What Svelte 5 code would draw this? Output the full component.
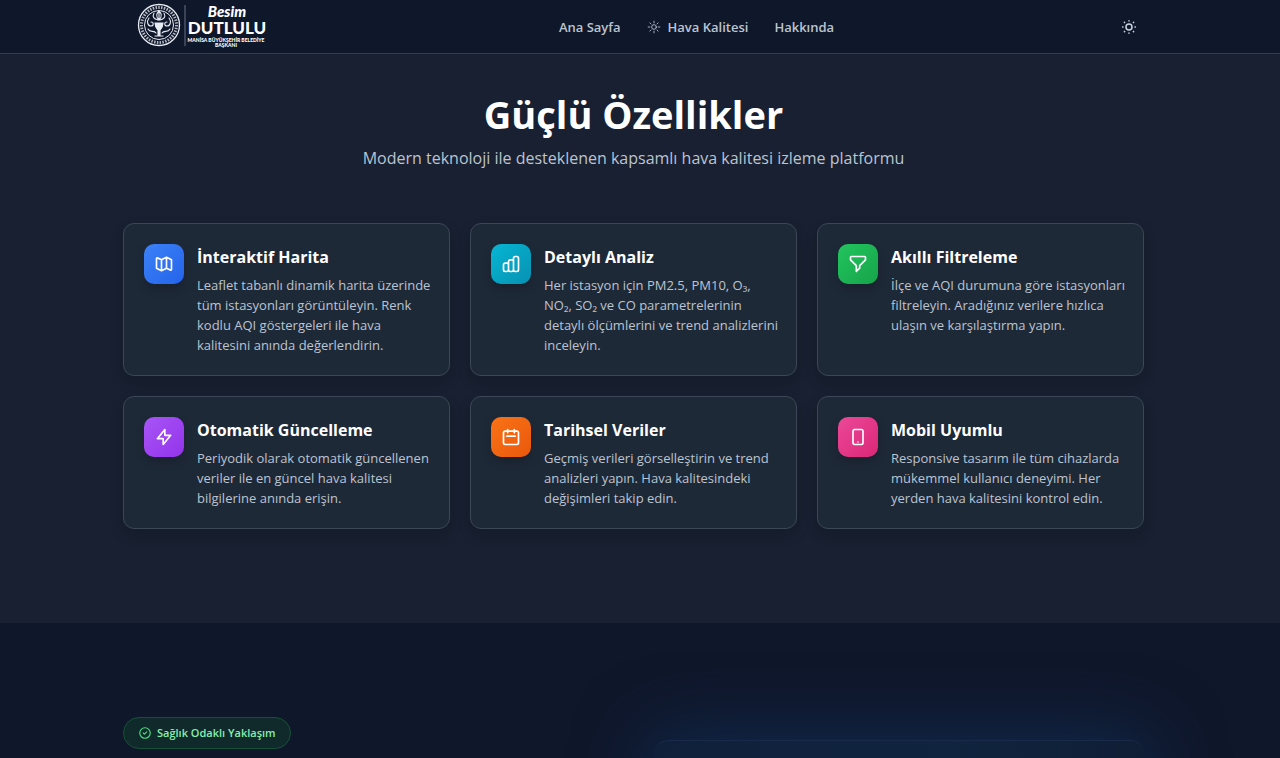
<script>
	const features = [
		{
			title: "İnteraktif Harita",
			text: "Leaflet tabanlı dinamik harita üzerinde tüm istasyonları görüntüleyin. Renk kodlu AQI göstergeleri ile hava kalitesini anında değerlendirin.",
			color: "blue",
			icon: "M9 20l-5.447-2.724A1 1 0 013 16.382V5.618a1 1 0 011.447-.894L9 7m0 13l6-3m-6 3V7m6 10l4.553 2.276A1 1 0 0021 18.382V7.618a1 1 0 00-.553-.894L15 4m0 13V4m0 0L9 7"
		},
		{
			title: "Detaylı Analiz",
			text: "Her istasyon için PM2.5, PM10, O₃, NO₂, SO₂ ve CO parametrelerinin detaylı ölçümlerini ve trend analizlerini inceleyin.",
			color: "cyan",
			icon: "M9 19v-6a2 2 0 00-2-2H5a2 2 0 00-2 2v6a2 2 0 002 2h2a2 2 0 002-2zm0 0V9a2 2 0 012-2h2a2 2 0 012 2v10m-6 0a2 2 0 002 2h2a2 2 0 002-2m0 0V5a2 2 0 012-2h2a2 2 0 012 2v14a2 2 0 01-2 2h-2a2 2 0 01-2-2z"
		},
		{
			title: "Akıllı Filtreleme",
			text: "İlçe ve AQI durumuna göre istasyonları filtreleyin. Aradığınız verilere hızlıca ulaşın ve karşılaştırma yapın.",
			color: "green",
			icon: "M3 4a1 1 0 011-1h16a1 1 0 011 1v2.586a1 1 0 01-.293.707l-6.414 6.414a1 1 0 00-.293.707V17l-4 4v-6.586a1 1 0 00-.293-.707L3.293 7.293A1 1 0 013 6.586V4z"
		},
		{
			title: "Otomatik Güncelleme",
			text: "Periyodik olarak otomatik güncellenen veriler ile en güncel hava kalitesi bilgilerine anında erişin.",
			color: "purple",
			icon: "M13 10V3L4 14h7v7l9-11h-7z"
		},
		{
			title: "Tarihsel Veriler",
			text: "Geçmiş verileri görselleştirin ve trend analizleri yapın. Hava kalitesindeki değişimleri takip edin.",
			color: "orange",
			icon: "M8 7V3m8 4V3m-9 8h10M5 21h14a2 2 0 002-2V7a2 2 0 00-2-2H5a2 2 0 00-2 2v12a2 2 0 002 2z"
		},
		{
			title: "Mobil Uyumlu",
			text: "Responsive tasarım ile tüm cihazlarda mükemmel kullanıcı deneyimi. Her yerden hava kalitesini kontrol edin.",
			color: "pink",
			icon: "M12 18h.01M8 21h8a2 2 0 002-2V5a2 2 0 00-2-2H8a2 2 0 00-2 2v14a2 2 0 002 2z"
		}
	];

	let dark = $state(true);
</script>

<div class="page" class:light={!dark}>
	<header>
		<div class="container bar">
			<a class="logo" href="#top" aria-label="Besim Dutlulu">
				<svg width="130" height="48" viewBox="0 0 130 48" fill="none" stroke="#e8ecf3">
					<circle cx="22" cy="22" r="20.5" stroke-width="1.3" />
					<circle cx="22" cy="22" r="17.5" stroke-width="3" stroke-dasharray="1.5 1.3" opacity="0.75" />
					<circle cx="22" cy="22" r="14.5" stroke-width="1" />
					<g stroke-width="1.1" stroke-linecap="round">
						<path d="M22 8v9M22 8c-3 3-3 6 0 9c3-3 3-6 0-9zM17 10c-2 4 0 6 4 7M27 10c2 4 0 6-4 7" />
						<path d="M12 15c-3 4-1 8 2 8c3 0 3-4 0-4M32 15c3 4 1 8-2 8c-3 0-3-4 0-4" />
						<path d="M11 26c2 4 6 1 8 4M33 26c-2 4-6 1-8 4" />
						<path d="M18 20h8c0 4-2 6-3 7v5h-2v-5c-1-1-3-3-3-7zM18 33h8" fill="#e8ecf3" />
					</g>
					<path d="M48 2v41" stroke="#667085" stroke-width="1" />
					<g fill="#fff" stroke="none" text-anchor="middle">
						<text x="90" y="14" class="logo-script">Besim</text>
						<text x="90" y="31" class="logo-name">DUTLULU</text>
						<text x="89" y="39" class="logo-small">MANİSA BÜYÜKŞEHİR BELEDİYE</text>
						<text x="89" y="44" class="logo-small">BAŞKANI</text>
					</g>
				</svg>
			</a>

			<nav>
				<a href="#ana-sayfa">Ana Sayfa</a>
				<a href="#hava-kalitesi">
					<svg width="14" height="14" viewBox="0 0 24 24" fill="none" stroke="currentColor" stroke-width="1.5" stroke-linecap="round">
						<circle cx="12" cy="12" r="4" />
						<path d="M12 2v3M12 19v3M2 12h3M19 12h3M4.9 4.9l2 2M17.1 17.1l2 2M4.9 19.1l2-2M17.1 6.9l2-2" />
					</svg>
					Hava Kalitesi
				</a>
				<a href="#hakkinda">Hakkında</a>
			</nav>

			<button class="theme" type="button" aria-label="Tema değiştir" onclick={() => (dark = !dark)}>
				<svg width="16" height="16" viewBox="0 0 24 24" fill="none" stroke="currentColor" stroke-width="2.2" stroke-linecap="round">
					<circle cx="12" cy="12" r="4.5" />
					<path d="M12 2.5v.5M12 21v.5M2.5 12h.5M21 12h.5M5 5l.4.4M18.6 18.6l.4.4M5 19l.4-.4M18.6 5.4l.4-.4" />
				</svg>
			</button>
		</div>
	</header>

	<section class="features">
		<div class="container">
			<h2>Güçlü Özellikler</h2>
			<p class="lead">Modern teknoloji ile desteklenen kapsamlı hava kalitesi izleme platformu</p>

			<div class="grid">
				{#each features as feature}
					<article class="card">
						<div class="tile {feature.color}">
							<svg width="20" height="20" viewBox="0 0 24 24" fill="none" stroke="currentColor" stroke-width="2" stroke-linecap="round" stroke-linejoin="round">
								<path d={feature.icon} />
							</svg>
						</div>
						<div class="card-body">
							<h3>{feature.title}</h3>
							<p>{feature.text}</p>
						</div>
					</article>
				{/each}
			</div>
		</div>
	</section>

	<section class="health">
		<div class="container split">
			<div>
				<span class="badge">
					<svg width="14" height="14" viewBox="0 0 24 24" fill="none" stroke="currentColor" stroke-width="2" stroke-linecap="round" stroke-linejoin="round">
						<path d="M9 12l2 2 4-4m6 2a9 9 0 11-18 0 9 9 0 0118 0z" />
					</svg>
					Sağlık Odaklı Yaklaşım
				</span>
			</div>
			<div class="panel"></div>
		</div>
	</section>
</div>

<style>
	:global(body) {
		background: #0f172a;
	}

	.page {
		color: #bcc4d0;
		font-family: "Segoe UI", "Open Sans", "Noto Sans", sans-serif;
		font-size: 13px;
		height: 100vh;
		line-height: 20px;
		overflow: hidden;
	}

	.page.light {
		filter: invert(1) hue-rotate(180deg);
	}

	header,
	section {
		padding-right: 13px;
	}

	.container {
		margin: 0 auto;
		max-width: 1021px;
	}

	header {
		background: #0f172a;
		border-bottom: 1px solid #333c4e;
	}

	.bar {
		align-items: center;
		display: flex;
		height: 53px;
		justify-content: space-between;
	}

	.logo {
		padding: 0 12px 0 14px;
	}

	.logo svg {
		display: block;
	}

	.logo-script {
		font: italic 900 15px Lato, sans-serif;
	}

	.logo-name {
		font: 900 17px Lato, sans-serif;
	}

	.logo-small {
		font: 900 5px Lato, sans-serif;
	}

	nav {
		display: flex;
		gap: 26px;
	}

	nav a {
		align-items: center;
		color: #bcc4d0;
		display: flex;
		font-weight: 600;
		gap: 7px;
		text-decoration: none;
	}

	.theme {
		align-items: center;
		background: none;
		border: 0;
		color: #cbd5e1;
		cursor: pointer;
		display: flex;
		padding: 7px;
	}

	.features {
		background: #182031;
		padding-bottom: 94px;
		padding-top: 35px;
	}

	h2 {
		color: #fff;
		font-size: 38px;
		font-weight: 700;
		line-height: 50px;
		margin: 0;
		text-align: center;
	}

	.lead {
		font-size: 16px;
		line-height: 24px;
		margin: 7px 0 53px;
		text-align: center;
	}

	.grid {
		display: grid;
		gap: 20px;
		grid-template-columns: repeat(3, 1fr);
	}

	.card {
		background: #1e2938;
		border: 1px solid #3b4656;
		border-radius: 11px;
		box-shadow: 0 6px 14px rgba(0, 0, 0, 0.15);
		display: flex;
		gap: 13px;
		padding: 20px 15px 20px 20px;
	}

	.card-body {
		flex: 1;
	}

	.card p {
		margin: 0;
	}

	h3 {
		color: #fff;
		font-size: 16px;
		font-weight: 700;
		line-height: 26px;
		margin: 0 0 5px;
	}

	.tile {
		align-items: center;
		border-radius: 10px;
		box-shadow: 0 5px 10px rgba(0, 0, 0, 0.2);
		color: #fff;
		display: flex;
		flex: none;
		height: 40px;
		justify-content: center;
		width: 40px;
	}

	.blue {
		background: linear-gradient(135deg, #3b82f6, #2563eb);
	}

	.cyan {
		background: linear-gradient(135deg, #06b6d4, #0891b2);
	}

	.green {
		background: linear-gradient(135deg, #22c55e, #16a34a);
	}

	.purple {
		background: linear-gradient(135deg, #a855f7, #9333ea);
	}

	.orange {
		background: linear-gradient(135deg, #f97316, #ea580c);
	}

	.pink {
		background: linear-gradient(135deg, #ec4899, #db2777);
	}

	.health {
		background: #0f172a;
		overflow: hidden;
		padding-top: 94px;
	}

	.split {
		display: grid;
		gap: 40px;
		grid-template-columns: 1fr 1fr;
	}

	.badge {
		align-items: center;
		background: #102a2b;
		border: 1px solid #175135;
		border-radius: 16px;
		color: #86efac;
		display: inline-flex;
		font-size: 11px;
		font-weight: 600;
		gap: 5px;
		line-height: 16px;
		padding: 7px 14px;
	}

	.badge svg {
		color: #4ade80;
	}

	.panel {
		background: linear-gradient(90deg, #10203b, #10243f 60%, #101e35);
		border-top: 1px solid #192a48;
		border-radius: 14px;
		box-shadow: 0 0 70px 6px rgba(18, 52, 98, 0.65);
		height: 240px;
		margin-top: 23px;
	}
</style>
